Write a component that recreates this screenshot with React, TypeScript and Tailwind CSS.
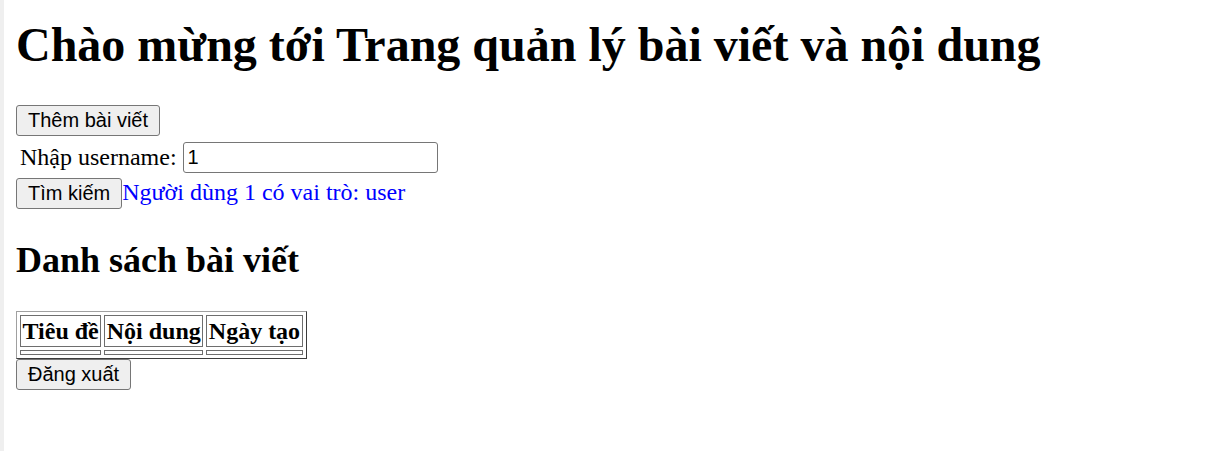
import React from "react";

export default function App() {
  const serif = { fontFamily: '"Liberation Serif", "Times New Roman", serif' } as React.CSSProperties;
  const btn =
    "font-['Liberation_Sans',Arial,sans-serif] text-[20px] leading-[23px] text-black bg-[#efefef] border border-[#767676] rounded-[3px] px-[11px] py-[3px]";
  const th =
    "border border-[#6e6e6e] px-[1.5px] py-[1px] text-[24px] leading-[28px] font-bold whitespace-nowrap";
  const td = "h-[5px] border border-[#6e6e6e] p-[1px]";
  return (
    <div className="flex h-[451px] w-[1210px] bg-white text-black" style={serif}>
      <div className="w-[4px] shrink-0 bg-[#efefef]" />
      <div className="flex flex-col items-start pl-[12px] font-['Liberation_Serif',serif]">
        <h1 className="mt-[17px] mb-[33px] text-[48px] leading-[55px] font-bold whitespace-nowrap">
          Chào mừng tới Trang quản lý bài viết và nội dung
        </h1>
        <div className="flex h-[31px] items-start">
          <button className={btn}>Thêm bài viết</button>
        </div>
        <div className="flex h-[42px] items-center text-[24px] leading-[28px]">
          <span className="ml-[4px] mr-[6px]">Nhập username:</span>
          <input
            defaultValue="1"
            className="h-[31px] w-[255px] rounded-[3px] border border-[#767676] bg-white pl-[4px] font-['Liberation_Sans',Arial,sans-serif] text-[20px] text-black outline-none"
          />
        </div>
        <div className="flex h-[31px] items-baseline">
          <button className={btn}>Tìm kiếm</button>
          <span className="text-[24px] leading-[28px] text-[#0000ff]">Người dùng 1 có vai trò: user</span>
        </div>
        <h2 className="mt-[31px] mb-[30px] text-[36px] leading-[41px] font-bold whitespace-nowrap">
          Danh sách bài viết
        </h2>
        <table className="border-separate border-spacing-[3px] border border-t-[#a0a0a0] border-l-[#a0a0a0] border-b-[#3c3c3c] border-r-[#3c3c3c]">
          <thead>
            <tr>
              <th className={th}>Tiêu đề</th>
              <th className={th}>Nội dung</th>
              <th className={th}>Ngày tạo</th>
            </tr>
          </thead>
          <tbody>
            <tr>
              <td className={td} />
              <td className={td} />
              <td className={td} />
            </tr>
          </tbody>
        </table>
        <button className={btn}>Đăng xuất</button>
      </div>
    </div>
  );
}
